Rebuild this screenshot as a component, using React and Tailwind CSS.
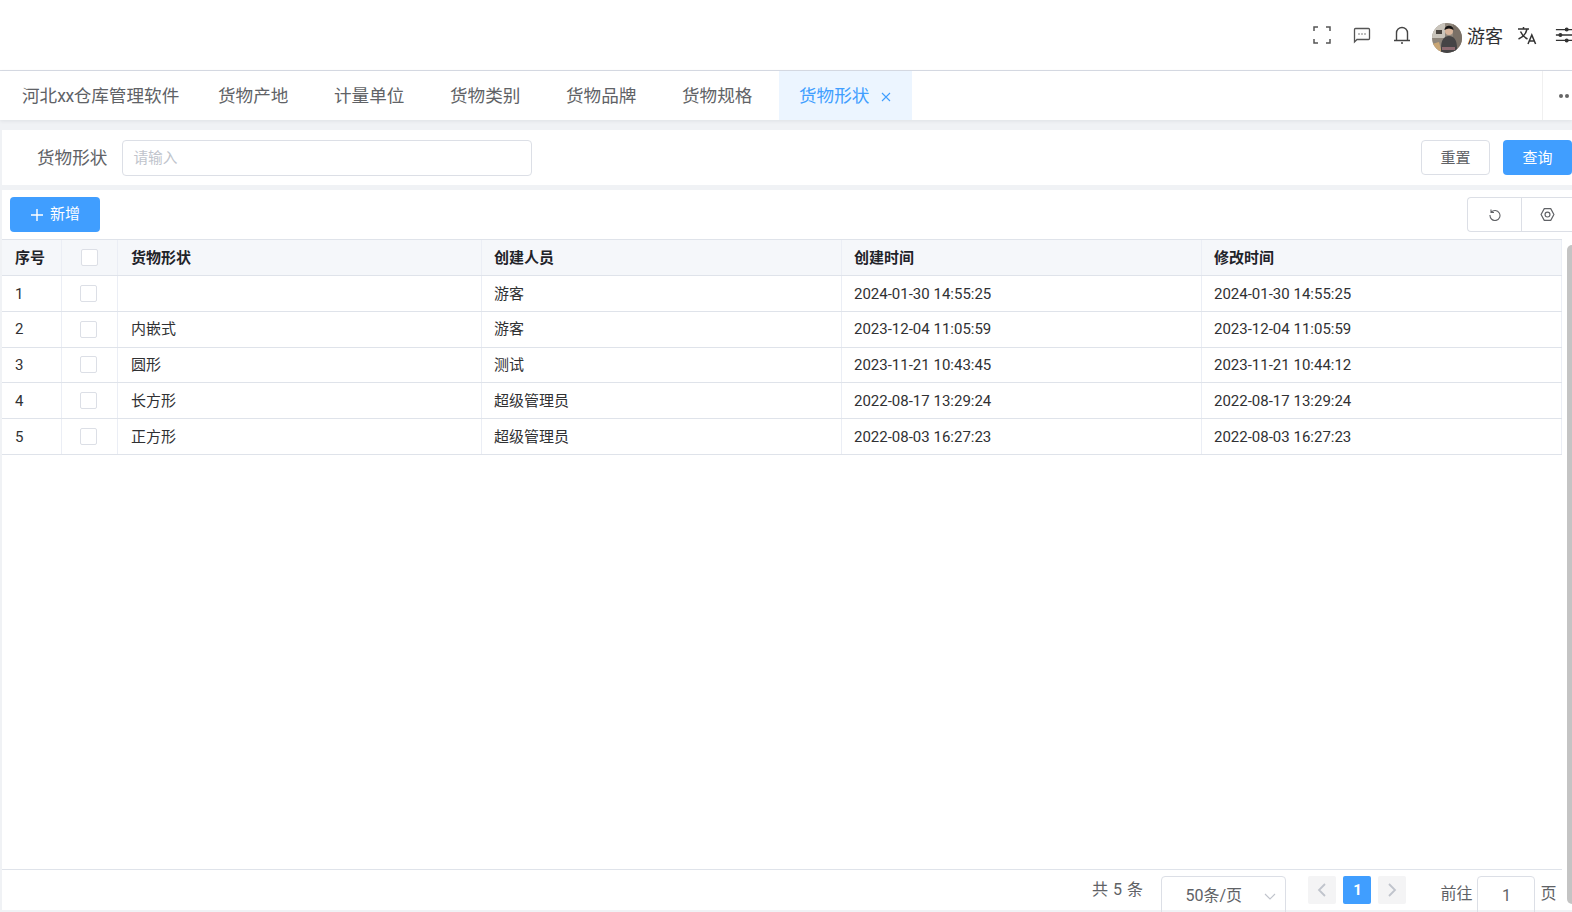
const tabs = ['货物产地', '计量单位', '货物类别', '货物品牌', '货物规格'];

const rows = [
  ['1', '', '游客', '2024-01-30 14:55:25', '2024-01-30 14:55:25'],
  ['2', '内嵌式', '游客', '2023-12-04 11:05:59', '2023-12-04 11:05:59'],
  ['3', '圆形', '测试', '2023-11-21 10:43:45', '2023-11-21 10:44:12'],
  ['4', '长方形', '超级管理员', '2022-08-17 13:29:24', '2022-08-17 13:29:24'],
  ['5', '正方形', '超级管理员', '2022-08-03 16:27:23', '2022-08-03 16:27:23'],
];

function Avatar() {
  return (
    <svg width="30" height="30" viewBox="0 0 30 30" className="rounded-full mt-[6px]">
      <rect width="30" height="30" fill="#8f867b" />
      <rect x="0" y="0" width="13" height="15" fill="#c9c4bb" />
      <rect x="4" y="7" width="6" height="4" fill="#4a4540" />
      <rect x="21" y="0" width="9" height="30" fill="#7a7066" />
      <path d="M0 21l7-2 3 11H0z" fill="#c9a675" />
      <circle cx="17" cy="8" r="4" fill="#d8b49a" />
      <path d="M12.500 7c0-5 9-6 9 0-3-2-6-2-9 0z" fill="#151313" />
      <path d="M9 25c0-8 3-12 8-12s8 4 8 12v5H9z" fill="#454445" />
      <path d="M10 24h13v3H10z" fill="#8d6a70" />
    </svg>
  );
}

function HeaderIcons() {
  return (
    <div className="flex items-center">
      <svg width="20" height="20" viewBox="0 0 20 20" fill="none" stroke="#555" strokeWidth="1.5">
        <path d="M2 6V2h4M14 2h4v4M18 14v4h-4M6 18H2v-4" />
      </svg>
      <svg width="20" height="20" viewBox="0 0 20 20" fill="none" stroke="#555" strokeWidth="1.3" className="ml-5">
        <path d="M2.500 17V4.500a1 1 0 0 1 1-1h13a1 1 0 0 1 1 1v9a1 1 0 0 1-1 1H5z" />
        <path d="M6.500 9h1M9.500 9h1M12.500 9h1" strokeWidth="1.600" />
      </svg>
      <svg width="20" height="20" viewBox="0 0 20 20" fill="none" stroke="#444" strokeWidth="1.400" className="ml-5">
        <path d="M4.500 15V8a5.500 5.500 0 0 1 11 0v7M2 15.500h16" />
        <path d="M9 18h2" />
      </svg>
    </div>
  );
}

function Checkbox() {
  return <span className="block w-[17px] h-[17px] border border-[#dcdfe6] rounded-[2px] bg-white" />;
}

export default function App() {
  return (
    <div
      className="w-[1572px] h-[912px] overflow-hidden bg-[#f0f2f5] flex flex-col text-[#606266]"
      style={{ fontFamily: 'Roboto, "Noto Sans CJK SC", sans-serif' }}
    >
      <header className="h-[71px] shrink-0 bg-white border-b border-[#d8dce5] flex items-center justify-end">
        <HeaderIcons />
        <div className="ml-5 flex items-center">
          <Avatar />
          <span className="ml-[5px] mt-[3px] text-[18px] leading-none text-[#303133]">游客</span>
        </div>
        <svg width="22" height="22" viewBox="0 0 22 22" fill="none" stroke="#333" strokeWidth="1.500" className="ml-[14px] mt-[2px]">
          <path d="M1 4h11M6.500 2v2M10 4c-1 5-4 8-8.500 10M3.500 6.500c1.500 3.500 4 6 7 7.500" />
          <path d="M11 19l3.800-9 3.800 9M12.300 16h5" />
        </svg>
        <svg width="18" height="20" viewBox="0 0 20 20" fill="none" stroke="#333" strokeWidth="1.400" className="ml-[16px] mr-[-1px] shrink-0">
          <path d="M1 4h18M1 10h18M1 16h18" />
          <circle cx="13" cy="4" r="1.500" fill="#333" />
          <circle cx="6" cy="10" r="1.500" fill="#333" />
          <circle cx="13" cy="16" r="1.500" fill="#333" />
        </svg>
      </header>

      <nav className="h-[49px] shrink-0 bg-white flex items-stretch shadow-[0_1px_4px_rgba(0,21,41,0.08)] text-[17.600px] text-[#606266]">
        <div className="pl-[22px] pt-[2px] flex items-center w-[198px] whitespace-nowrap">
          河北<span className="tracking-[-0.500px]">xx</span>仓库管理软件
        </div>
        {tabs.map((tab) => (
          <div key={tab} className="w-[116px] pt-[2px] flex items-center pl-5 whitespace-nowrap">{tab}</div>
        ))}
        <div className="w-[133px] pt-[2px] bg-[#ecf5ff] text-[#409eff] flex items-center pl-5 ml-[1px] whitespace-nowrap">
          货物形状
          <svg width="10" height="10" viewBox="0 0 10 10" fill="none" stroke="#409eff" strokeWidth="1.100" className="ml-[12px]">
            <path d="M1 1l8 8M9 1l-8 8" />
          </svg>
        </div>
        <div className="flex-1" />
        <div className="w-[30px] border-l border-[#f0f0f0] flex items-center pl-[16px]">
          <span className="w-1 h-1 rounded-full bg-[#666]" />
          <span className="w-1 h-1 rounded-full bg-[#666] ml-[2px] shrink-0" />
        </div>
      </nav>

      <section className="mt-[10px] ml-[2px] h-[55px] shrink-0 bg-white flex items-center">
        <span className="ml-[35px] pt-[2px] text-[17.600px] text-[#606266]">货物形状</span>
        <div className="ml-[15px] w-[410px] h-[36px] pt-[1px] border border-[#dcdfe6] rounded-[4px] flex items-center px-[10px] text-[14.700px] text-[#c0c4cc]">请输入</div>
        <div className="flex-1" />
        <button className="w-[69px] h-[35px] pt-[1px] border border-[#dcdfe6] rounded-[4px] bg-white text-[15px] text-[#606266]">重置</button>
        <button className="ml-[13px] w-[69px] h-[35px] pt-[1px] rounded-[4px] bg-[#409eff] text-[15px] text-white">查询</button>
      </section>

      <main className="mt-[5px] ml-[2px] flex-1 min-h-0 bg-white flex flex-col relative">
        <div className="h-[49px] shrink-0 flex items-center pl-2">
          <button className="w-[90px] h-[35px] rounded-[4px] bg-[#409eff] text-[15px] text-white flex items-center justify-center">
            <svg width="14" height="14" viewBox="0 0 14 14" fill="none" stroke="white" strokeWidth="1.400" className="mr-[6px]">
              <path d="M7 1v12M1 7h12" />
            </svg>
            新增
          </button>
          <div className="flex-1" />
          <div className="flex h-[35px] w-[105px] border border-r-0 border-[#dcdfe6] rounded-l-[4px]">
            <div className="w-[53px] flex items-center justify-center">
              <svg width="14" height="14" viewBox="0 0 14 14" fill="none" stroke="#606266" strokeWidth="1.100" className="-mt-[2px]">
                <path d="M3 2.500v3h3M3.200 5.200A5 5 0 1 1 2 8" />
              </svg>
            </div>
            <div className="flex-1 border-l border-[#dcdfe6] flex items-center justify-center">
              <svg width="15" height="15" viewBox="0 0 14 14" fill="none" stroke="#606266" strokeWidth="1.100">
                <path d="M4 1.500h6L13 7l-3 5.500H4L1 7z" strokeLinejoin="round" />
                <circle cx="7" cy="7" r="2.300" />
              </svg>
            </div>
          </div>
        </div>

        <div className="w-[1560px] text-[15px] text-[#303133]">
          <div className="flex h-[37px] items-center bg-[#f5f7fa] border-y border-[#dfe3ea] font-semibold text-[#1f2329]">
            <div className="w-[60px] h-full pl-[13px] pt-[1px] flex items-center border-r border-[#ebeef5]">序号</div>
            <div className="w-[56px] h-full flex items-center justify-center border-r border-[#ebeef5]"><Checkbox /></div>
            <div className="w-[364px] h-full pl-[13px] pt-[1px] flex items-center border-r border-[#ebeef5]">货物形状</div>
            <div className="w-[360px] h-full pl-[12px] pt-[1px] flex items-center border-r border-[#ebeef5]">创建人员</div>
            <div className="w-[360px] h-full pl-[12px] pt-[1px] flex items-center border-r border-[#ebeef5]">创建时间</div>
            <div className="w-[360px] h-full pl-[12px] pt-[1px] flex items-center border-r border-[#ebeef5]">修改时间</div>
          </div>
          {rows.map((row) => (
            <div key={row[0]} className="flex h-[35.800px] items-center border-b border-[#dfe3ea]">
              <div className="w-[60px] h-full pl-[13px] pt-[1px] flex items-center border-r border-[#ebeef5]">{row[0]}</div>
              <div className="w-[56px] h-full pr-[2px] flex items-center justify-center border-r border-[#ebeef5]"><Checkbox /></div>
              <div className="w-[364px] h-full pl-[13px] pt-[1px] flex items-center border-r border-[#ebeef5]">{row[1]}</div>
              <div className="w-[360px] h-full pl-[12px] pt-[1px] flex items-center border-r border-[#ebeef5]">{row[2]}</div>
              <div className="w-[360px] h-full pl-[12px] pt-[1px] flex items-center border-r border-[#ebeef5]">{row[3]}</div>
              <div className="w-[360px] h-full pl-[12px] pt-[1px] flex items-center border-r border-[#ebeef5]">{row[4]}</div>
            </div>
          ))}
        </div>

        <div className="flex-1" />

        <footer className="w-[1560px] h-[41px] shrink-0 border-t border-[#dfe3ea] flex items-start text-[16px] text-[#606266] relative">
          <span className="ml-[1090px] mt-[10px] leading-[20px] tracking-[0.500px] whitespace-nowrap">共 5 条</span>
          <div className="ml-[18px] mt-[6px] w-[125px] h-[40px] border border-[#dcdfe6] rounded-[4px] flex items-center pl-[23px] pr-[9px] justify-between">
            <span className="whitespace-nowrap -mt-[1px]">50条/页</span>
            <svg width="12" height="12" viewBox="0 0 12 12" fill="none" stroke="#c0c4cc" strokeWidth="1.100"><path d="M1 4l5 5 5-5" /></svg>
          </div>
          <div className="ml-[22px] mt-[6px] w-7 h-7 rounded-[2px] bg-[#f4f4f5] flex items-center justify-center">
            <svg width="10" height="14" viewBox="0 0 10 14" fill="none" stroke="#c0c4cc" strokeWidth="1.800"><path d="M8 1L2 7l6 6" /></svg>
          </div>
          <div className="ml-[7px] mt-[6px] w-7 h-7 rounded-[2px] bg-[#409eff] text-white font-bold text-[15px] flex items-center justify-center">1</div>
          <div className="ml-[7px] mt-[6px] w-7 h-7 rounded-[2px] bg-[#f4f4f5] flex items-center justify-center">
            <svg width="10" height="14" viewBox="0 0 10 14" fill="none" stroke="#c0c4cc" strokeWidth="1.800"><path d="M2 1l6 6-6 6" /></svg>
          </div>
          <span className="ml-[34px] mt-[14px] leading-[20px] whitespace-nowrap">前往</span>
          <div className="ml-[5px] mt-[6px] w-[58px] h-[40px] border border-[#dcdfe6] rounded-[4px] flex items-center justify-center">1</div>
          <span className="ml-[5px] mt-[14px] leading-[20px]">页</span>
        </footer>

        <div className="absolute right-0 top-[55px] bottom-[6px] w-[5px] rounded-l-full bg-[#c4c4c4]" />
      </main>
      <div className="h-[2px] shrink-0" />
    </div>
  );
}
